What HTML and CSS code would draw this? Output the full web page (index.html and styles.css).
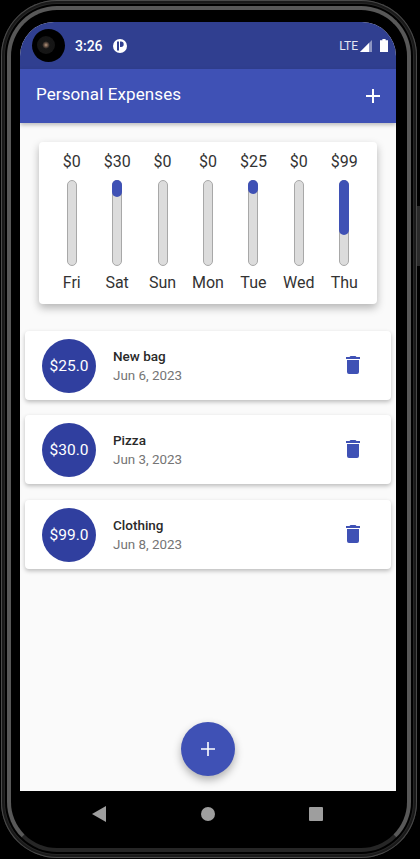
FILE: index.html
```html
<!DOCTYPE html>
<html lang="en">
<head>
    <meta charset="UTF-8">
    <meta name="viewport" content="width=device-width, initial-scale=1.0">
    <title>Personal Expenses</title>
    <link rel="stylesheet" href="styles.css">
</head>
<body>

<div class="phone">
    <span class="side-button"></span>
    <div class="screen">
        <div class="status-bar">
            <span class="camera"><span class="lens"></span></span>
            <span class="clock">3:26</span>
            <svg class="notif" width="14" height="14" viewBox="0 0 14 14">
                <circle cx="7" cy="7" r="7" fill="#fff"/>
                <path d="M4 2.500h2v9H4zM7 2.500h1a2.700 2.700 0 0 1 0 5.400H7z" fill="#303f90"/>
            </svg>
            <span class="status-right">
                <span class="lte">LTE</span>
                <svg width="12" height="12" viewBox="0 0 12 12">
                    <path d="M12 0v12H0z" fill="#fff" opacity=".45"/>
                    <path d="M9 3v9H0z" fill="#fff"/>
                </svg>
                <svg class="battery" width="8" height="13" viewBox="0 0 8 13">
                    <path d="M2.400 0h3.200v1.200H8V13H0V1.200h2.400z" fill="#fff"/>
                </svg>
            </span>
        </div>

        <div class="app-bar">
            <h1>Personal Expenses</h1>
            <svg width="14" height="14" viewBox="0 0 14 14">
                <path d="M6 0h2v6h6v2H8v6H6V8H0V6h6z" fill="#fff"/>
            </svg>
        </div>

        <div class="content">
            <div class="chart">
                <div class="day">
                    <span class="amount">$0</span>
                    <div class="track"></div>
                    <span class="label">Fri</span>
                </div>
                <div class="day">
                    <span class="amount">$30</span>
                    <div class="track"><div class="fill" style="height: 20%"></div></div>
                    <span class="label">Sat</span>
                </div>
                <div class="day">
                    <span class="amount">$0</span>
                    <div class="track"></div>
                    <span class="label">Sun</span>
                </div>
                <div class="day">
                    <span class="amount">$0</span>
                    <div class="track"></div>
                    <span class="label">Mon</span>
                </div>
                <div class="day">
                    <span class="amount">$25</span>
                    <div class="track"><div class="fill" style="height: 17%"></div></div>
                    <span class="label">Tue</span>
                </div>
                <div class="day">
                    <span class="amount">$0</span>
                    <div class="track"></div>
                    <span class="label">Wed</span>
                </div>
                <div class="day">
                    <span class="amount">$99</span>
                    <div class="track"><div class="fill" style="height: 65%"></div></div>
                    <span class="label">Thu</span>
                </div>
            </div>

            <ul class="list">
                <li class="item">
                    <span class="avatar">$25.0</span>
                    <div class="info">
                        <span class="title">New bag</span>
                        <span class="date">Jun 6, 2023</span>
                    </div>
                    <svg class="trash" width="14" height="18" viewBox="0 0 14 18">
                        <path d="M4.500 0h5l1 1H14v2H0V1h3.500zM1 4h12v12a2 2 0 0 1-2 2H3a2 2 0 0 1-2-2z" fill="#3f51b5"/>
                    </svg>
                </li>
                <li class="item">
                    <span class="avatar">$30.0</span>
                    <div class="info">
                        <span class="title">Pizza</span>
                        <span class="date">Jun 3, 2023</span>
                    </div>
                    <svg class="trash" width="14" height="18" viewBox="0 0 14 18">
                        <path d="M4.500 0h5l1 1H14v2H0V1h3.500zM1 4h12v12a2 2 0 0 1-2 2H3a2 2 0 0 1-2-2z" fill="#3f51b5"/>
                    </svg>
                </li>
                <li class="item">
                    <span class="avatar">$99.0</span>
                    <div class="info">
                        <span class="title">Clothing</span>
                        <span class="date">Jun 8, 2023</span>
                    </div>
                    <svg class="trash" width="14" height="18" viewBox="0 0 14 18">
                        <path d="M4.500 0h5l1 1H14v2H0V1h3.500zM1 4h12v12a2 2 0 0 1-2 2H3a2 2 0 0 1-2-2z" fill="#3f51b5"/>
                    </svg>
                </li>
            </ul>

            <div class="fab">
                <svg width="14" height="14" viewBox="0 0 14 14">
                    <path d="M6.200 0h1.600v6.200H14v1.600H7.800V14H6.200V7.800H0V6.200h6.200z" fill="#fff"/>
                </svg>
            </div>
        </div>
    </div>

    <div class="nav-bar">
        <svg width="14" height="16" viewBox="0 0 14 16"><path d="M14 0v16L0 8z" fill="#9e9e9e"/></svg>
        <span class="nav-home"></span>
        <span class="nav-recent"></span>
    </div>
</div>

</body>
</html>
```

FILE: styles.css
```css
/* Global Styles */
html, body {
    margin: 0;
    height: 100%;
    background-color: #000000;
}

body {
    font-family: Roboto, sans-serif;
    overflow: hidden;
}

/* Device Frame */
.phone {
    box-sizing: border-box;
    position: relative;
    width: 416px;
    height: 858px;
    margin-left: 1px;
    padding: 22px 21px 0 19px;
    display: flex;
    flex-direction: column;
    background-color: #000000;
    border-radius: 56px;
    box-shadow:
        inset 0 0 0 1px #4a4a4a,
        inset 0 0 0 3px #1a1a1a,
        inset 0 0 0 4px #262626;
}

/* inner metal band, dimmer along the bottom edge */
.phone::before {
    content: "";
    position: absolute;
    inset: 6px;
    border: 4px solid #585858;
    border-bottom-color: #262626;
    border-radius: 50px;
    pointer-events: none;
}

.side-button {
    position: absolute;
    right: -3px;
    top: 206px;
    width: 3px;
    height: 60px;
    background-color: #2a2a2a;
}

.screen {
    position: relative;
    height: 769px;
    display: flex;
    flex-direction: column;
    background-color: #fafafa;
    border-radius: 34px 34px 0 0;
    overflow: hidden;
}

/* Status Bar */
.status-bar {
    height: 47px;
    flex-shrink: 0;
    display: flex;
    align-items: center;
    padding: 0 8px 0 12px;
    background-color: #303f90;
    color: #ffffff;
}

.camera {
    width: 33px;
    height: 33px;
    display: flex;
    align-items: center;
    justify-content: center;
    border-radius: 50%;
    background-color: #000000;
}

.lens {
    width: 18px;
    height: 18px;
    margin: 0 5px 2px 0;
    border-radius: 50%;
    background: radial-gradient(circle, #b89a80 0, #6a5548 14%, #161616 30%, #141414 100%);
}

.clock {
    margin-left: 10px;
    font-size: 14px;
    font-weight: 500;
}

.notif {
    margin-left: 10px;
}

.status-right {
    margin-left: auto;
    display: flex;
    align-items: center;
    gap: 2px;
}

.lte {
    font-size: 12px;
    color: #e4e6f2;
}

.battery {
    margin-left: 6px;
}

/* App Bar */
.app-bar {
    height: 54px;
    flex-shrink: 0;
    box-sizing: border-box;
    display: flex;
    align-items: center;
    justify-content: space-between;
    padding: 0 16px 0;
    background-color: #3f51b5;
    box-shadow: 0 2px 4px rgba(0, 0, 0, 0.25);
    position: relative;
}

h1 {
    margin: 0 0 5px;
    font-size: 17px;
    font-weight: 400;
    letter-spacing: 0.1px;
    color: #ffffff;
}

/* Chart */
.content {
    flex: 1;
    position: relative;
    padding: 19px 5px 0;
}

.chart {
    height: 162px;
    margin: 0 14px;
    padding: 8px 10px 0;
    box-sizing: border-box;
    display: flex;
    background-color: #ffffff;
    border-radius: 4px;
    box-shadow: 0 4px 8px rgba(0, 0, 0, 0.28);
}

.day {
    flex: 1;
    display: flex;
    flex-direction: column;
    align-items: center;
    font-size: 16px;
    color: #333333;
}

.amount, .label {
    height: 24px;
    line-height: 24px;
    white-space: nowrap;
}

.track {
    box-sizing: border-box;
    width: 10px;
    height: 86px;
    margin: 6px 0 5px;
    background-color: #dcdcdc;
    border: 1px solid #a8a8a8;
    border-radius: 5px;
}

.fill {
    margin: -1px;
    background-color: #3f51b5;
    border-radius: 5px;
}

/* Transaction List */
.list {
    list-style-type: none;
    margin: 27px 0 0;
    padding: 0;
    display: flex;
    flex-direction: column;
    gap: 15px;
}

.item {
    height: 69px;
    display: flex;
    align-items: center;
    padding: 0 31px 0 17px;
    background-color: #ffffff;
    border-radius: 4px;
    box-shadow: 0 2px 4px rgba(0, 0, 0, 0.25);
}

.item:last-child {
    margin-top: 1px;
}

.avatar {
    width: 54px;
    height: 54px;
    flex-shrink: 0;
    display: flex;
    align-items: center;
    justify-content: center;
    border-radius: 50%;
    background-color: #303f9f;
    color: #ffffff;
    font-size: 15.5px;
}

.info {
    flex: 1;
    margin: 2px 0 0 17px;
    display: flex;
    flex-direction: column;
    gap: 1px;
}

.title {
    font-size: 13.5px;
    font-weight: 500;
    line-height: 18px;
    color: #2a2a2a;
}

.date {
    font-size: 13.4px;
    line-height: 20px;
    color: #757575;
}

.trash {
    margin-bottom: 2px;
}

/* Floating Button */
.fab {
    position: absolute;
    left: 161px;
    bottom: 15px;
    width: 54px;
    height: 54px;
    display: flex;
    align-items: center;
    justify-content: center;
    border-radius: 50%;
    background-color: #3f51b5;
    box-shadow: 0 4px 8px rgba(0, 0, 0, 0.3);
}

/* Navigation Bar */
.nav-bar {
    position: relative;
    height: 46px;
    display: flex;
    align-items: center;
    justify-content: space-between;
    padding: 0 73px 0 72px;
}

.nav-home {
    width: 14px;
    height: 14px;
    border-radius: 50%;
    background-color: #9e9e9e;
}

.nav-recent {
    width: 14px;
    height: 14px;
    border-radius: 1px;
    background-color: #9e9e9e;
}
```
